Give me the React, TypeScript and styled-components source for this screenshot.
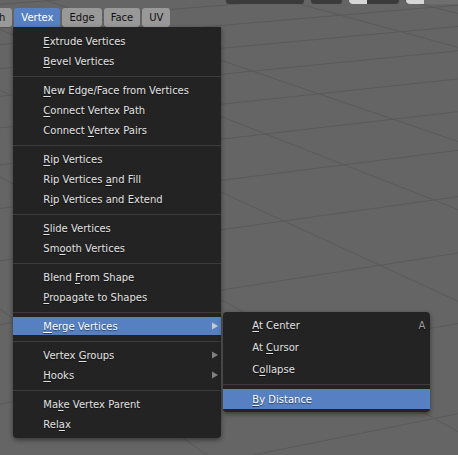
import React from "react";
import styled, { createGlobalStyle } from "styled-components";

const GlobalStyle = createGlobalStyle`
  html, body { margin: 0; padding: 0; background: #656565; }
  #root { width: 458px; height: 455px; }
`;

/* ---------- viewport + floor grid ---------- */

const Viewport = styled.div`
  position: relative;
  width: 458px;
  height: 455px;
  overflow: hidden;
  background: #656565;
  font-family: "DejaVu Sans", "Liberation Sans", sans-serif;
  font-size: 10px;
`;

const FloorGrid = styled.svg`
  position: absolute;
  inset: 0;
  width: 100%;
  height: 100%;
  pointer-events: none;
`;

const Chrome = styled.div`
  position: relative;
  z-index: 1;
  display: flex;
  flex-direction: column;
`;

// perspective floor: x-lines run toward VP_X, y-lines toward VP_Y
const VP_X = [-900, -324];
const VP_Y = [4000, -300];
const ORIGIN = [300, 41];
const SX = 0.05;
const SY = 0.028;

function project(x: number, y: number): [number, number] {
  const w = SX * x + SY * y + 1;
  return [
    (SX * x * VP_X[0] + SY * y * VP_Y[0] + ORIGIN[0]) / w,
    (SX * x * VP_X[1] + SY * y * VP_Y[1] + ORIGIN[1]) / w,
  ];
}

function gridLines() {
  const lines: { a: [number, number]; b: [number, number]; axis?: boolean }[] = [];
  const eps = 0.03;
  for (let c = -40; c <= 40; c++) {
    // line x = c
    const yLow = (eps - 1 - SX * c) / SY;
    lines.push({ a: project(c, yLow), b: project(c, 3000) });
    // line y = c
    const xLow = (eps - 1 - SY * c) / SX;
    lines.push({ a: project(xLow, c), b: project(3000, c), axis: c === 0 });
  }
  return lines;
}

const GRID = gridLines();

/* ---------- header ---------- */

const TopStrip = styled.div`
  height: 4px;
  display: flex;
  align-items: flex-end;
  gap: 7px;
  padding-left: 226px;
  overflow: hidden;
`;

const StripButton = styled.div<{ $w: number; $lead?: number; $tail: string }>`
  flex: none;
  width: ${(p) => p.$w}px;
  height: 20px;
  border-radius: 4px;
  background: ${(p) =>
    p.$lead
      ? `linear-gradient(to right, #d6d6d6 0 ${p.$lead}px, ${p.$tail} ${p.$lead}px)`
      : p.$tail};
  box-shadow: 0 1px 1px rgba(0, 0, 0, 0.25);
`;

const TabRow = styled.div`
  margin-top: 4px;
  margin-left: -28px;
  height: 19px;
  display: flex;
  gap: 2px;
`;

const Tab = styled.div<{ $active?: boolean }>`
  position: relative;
  flex: none;
  height: 19px;
  padding: 0 7px;
  display: flex;
  align-items: center;
  border-radius: ${(p) => (p.$active ? "3px 3px 0 0" : "3px")};
  background: ${(p) => (p.$active ? "#5680c2" : "#999999")};
  color: ${(p) => (p.$active ? "#ffffff" : "#111111")};
  box-shadow: ${(p) => (p.$active ? "none" : "0 1px 1px rgba(0,0,0,0.2)")};
  white-space: nowrap;
`;

/* ---------- menus ---------- */

const MenuPanel = styled.div`
  position: absolute;
  top: 100%;
  left: -1px;
  width: 208px;
  padding: 4px 0;
  display: flex;
  flex-direction: column;
  background: #232323;
  border-radius: 0 0 4px 4px;
  box-shadow: 0 2px 5px rgba(0, 0, 0, 0.45);
  z-index: 2;
`;

const SubPanel = styled.div`
  position: absolute;
  top: -5px;
  left: calc(100% + 2px);
  width: 207px;
  padding: 2px 0;
  display: flex;
  flex-direction: column;
  background: #232323;
  border-radius: 4px;
  box-shadow: 0 2px 5px rgba(0, 0, 0, 0.45);
  z-index: 3;
`;

const Item = styled.div<{ $hot?: boolean; $h: number; $indent: number }>`
  position: relative;
  flex: none;
  height: ${(p) => (p.$hot ? p.$h - 2 : p.$h)}px;
  margin: ${(p) => (p.$hot ? "1px 0" : "0")};
  padding: 0 4px 0 ${(p) => p.$indent}px;
  display: flex;
  align-items: center;
  justify-content: space-between;
  background: ${(p) => (p.$hot ? "#5680c2" : "transparent")};
  color: ${(p) => (p.$hot ? "#ffffff" : "#e2e2e2")};
  text-shadow: 0 1px 1px rgba(0, 0, 0, 0.55);
  white-space: nowrap;
`;

const Label = styled.span``;

const Key = styled.span`
  text-decoration: underline;
  text-underline-offset: 2px;
  text-decoration-thickness: 1px;
`;

const Shortcut = styled.span`
  color: #9a9a9a;
  padding-right: 1px;
`;

const Separator = styled.div<{ $top: number; $bottom: number }>`
  flex: none;
  height: 1px;
  margin: ${(p) => p.$top}px 0 ${(p) => p.$bottom}px;
  background: #3c3c3c;
`;

const Arrow = styled.svg<{ $hot?: boolean }>`
  width: 6px;
  height: 8px;
  margin-right: -1px;
  fill: ${(p) => (p.$hot ? "#c9c9c9" : "#808080")};
`;

type Entry =
  | { sep: true }
  | { label: string; key: number; sub?: boolean; hot?: boolean; shortcut?: string };

function Mnemonic({ text, at }: { text: string; at: number }) {
  return (
    <Label>
      {text.slice(0, at)}
      <Key>{text[at]}</Key>
      {text.slice(at + 1)}
    </Label>
  );
}

const MAIN: Entry[] = [
  { label: "Extrude Vertices", key: 0 },
  { label: "Bevel Vertices", key: 0 },
  { sep: true },
  { label: "New Edge/Face from Vertices", key: 0 },
  { label: "Connect Vertex Path", key: 0 },
  { label: "Connect Vertex Pairs", key: 8 },
  { sep: true },
  { label: "Rip Vertices", key: 0 },
  { label: "Rip Vertices and Fill", key: 13 },
  { label: "Rip Vertices and Extend", key: 1 },
  { sep: true },
  { label: "Slide Vertices", key: 0 },
  { label: "Smooth Vertices", key: 2 },
  { sep: true },
  { label: "Blend From Shape", key: 6 },
  { label: "Propagate to Shapes", key: 0 },
  { sep: true },
  { label: "Merge Vertices", key: 0, sub: true, hot: true },
  { sep: true },
  { label: "Vertex Groups", key: 7, sub: true },
  { label: "Hooks", key: 0, sub: true },
  { sep: true },
  { label: "Make Vertex Parent", key: 2 },
  { label: "Relax", key: 3 },
];

const MERGE: Entry[] = [
  { label: "At Center", key: 0, shortcut: "A" },
  { label: "At Cursor", key: 3 },
  { label: "Collapse", key: 1 },
  { sep: true },
  { label: "By Distance", key: 0, hot: true },
];

function SubArrow({ hot }: { hot?: boolean }) {
  return (
    <Arrow $hot={hot} viewBox="0 0 6 8">
      <polygon points="0,0.5 6,4 0,7.5" />
    </Arrow>
  );
}

function MergeMenu() {
  return (
    <SubPanel>
      {MERGE.map((e, i) =>
        "sep" in e ? (
          <Separator key={i} $top={4} $bottom={3} />
        ) : (
          <Item key={i} $h={22} $indent={29} $hot={e.hot}>
            <Mnemonic text={e.label} at={e.key} />
            {e.shortcut && <Shortcut>{e.shortcut}</Shortcut>}
          </Item>
        )
      )}
    </SubPanel>
  );
}

function VertexMenu() {
  return (
    <MenuPanel>
      {MAIN.map((e, i) =>
        "sep" in e ? (
          <Separator key={i} $top={5} $bottom={3} />
        ) : (
          <Item key={i} $h={20} $indent={30} $hot={e.hot}>
            <Mnemonic text={e.label} at={e.key} />
            {e.sub && <SubArrow hot={e.hot} />}
            {e.hot && <MergeMenu />}
          </Item>
        )
      )}
    </MenuPanel>
  );
}

export default function App() {
  return (
    <>
      <GlobalStyle />
      <Viewport>
        <FloorGrid viewBox="0 0 458 455">
          {GRID.filter((l) => !l.axis).map((l, i) => (
            <line
              key={i}
              x1={l.a[0]}
              y1={l.a[1]}
              x2={l.b[0]}
              y2={l.b[1]}
              stroke="#5a5a5a"
              strokeWidth={1}
            />
          ))}
          <line
            x1={project(-60, 0)[0]}
            y1={project(-60, 0)[1]}
            x2={project(3000, 0)[0]}
            y2={project(3000, 0)[1]}
            stroke="#9b3a46"
            strokeWidth={1.2}
          />
        </FloorGrid>
        <Chrome>
          <TopStrip>
            <StripButton $w={78} $tail="#3b3b3b" />
            <StripButton $w={31} $tail="#3b3b3b" />
            <StripButton $w={50} $lead={18} $tail="#3b3b3b" />
            <StripButton $w={60} $lead={18} $tail="#6f6f6f" />
          </TopStrip>
          <TabRow>
            <Tab>Mesh</Tab>
            <Tab $active>
              Vertex
              <VertexMenu />
            </Tab>
            <Tab>Edge</Tab>
            <Tab>Face</Tab>
            <Tab>UV</Tab>
          </TabRow>
        </Chrome>
      </Viewport>
    </>
  );
}
